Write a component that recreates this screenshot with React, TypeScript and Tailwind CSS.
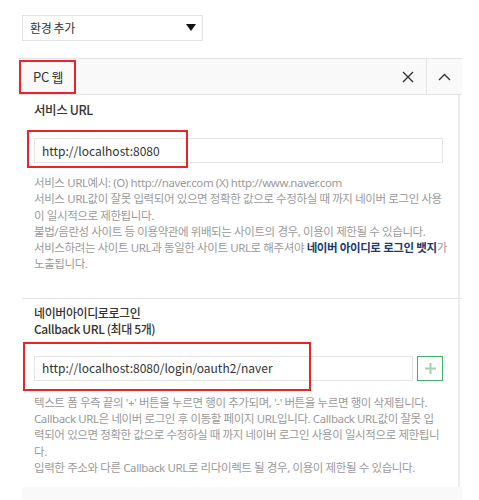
function Mark({ className }: { className: string }) {
  return <div className={`pointer-events-none absolute border-2 border-[#e8242b] ${className}`} />
}

function Help({ lines }: { lines: React.ReactNode[] }) {
  return <div className="font-['Noto_Sans','Noto_Sans_CJK_KR',sans-serif] text-[11.5px] leading-[16.3px] tracking-[-0.4px] text-[#9a9a9a]">
    {lines.map((l, i) => <div key={i} className="whitespace-nowrap">{l}</div>)}
  </div>
}

export default function App() {
  return <div className="h-[500px] w-[479px] overflow-hidden bg-white pt-[15px] font-['Noto_Sans_CJK_KR',sans-serif] text-[#333]">
    <div className="ml-[22px] flex h-[26px] w-[181px] items-center justify-between border border-[#e3e3e3] pl-[7px] pr-[6px] text-[12px] tracking-[-0.4px]">
      <span>환경 추가</span>
      <svg width="10" height="8" viewBox="0 0 10 8"><path d="M0 0H10L5 7Z" fill="#111" /></svg>
    </div>

    <div className="relative ml-[18px] mt-[17px] flex h-[37px] w-[444px] items-center border-y border-[#e5e5e5] bg-[#f9f9f9]">
      <span className="pl-[15px] text-[13px] tracking-[-0.3px]">PC 웹</span>
      <Mark className="left-[1px] top-[1px] h-[34px] w-[57px]" />
      <div className="ml-auto flex h-full">
        <div className="flex w-[36px] items-center justify-center">
          <svg width="12" height="12" viewBox="0 0 12 12"><path d="M1 1L11 11M11 1L1 11" stroke="#333" strokeWidth="1.4" /></svg>
        </div>
        <div className="flex w-[36px] items-center justify-center border-l border-[#e5e5e5]">
          <svg width="13" height="8" viewBox="0 0 13 8"><path d="M1 7L6.5 1.5L12 7" stroke="#333" strokeWidth="1.4" fill="none" /></svg>
        </div>
      </div>
    </div>

    <div className="ml-[18px] w-[442px] border-r-2 border-[#ececec]">
      <div className="pb-[25px] pl-4 pr-[15px] pt-[6px]">
        <div className="text-[12.5px] font-medium leading-[18px] tracking-[-0.4px]">서비스 URL</div>
        <div className="relative mt-[19px]">
          <div className="flex h-[25px] items-center border border-[#e5e5e5] pl-[7px] text-[12px]">http://localhost:8080</div>
          <Mark className="-left-[7px] -top-[8px] h-[38px] w-[161px]" />
        </div>
        <div className="mt-[12px]">
          <Help lines={[
            '서비스 URL예시: (O) http://naver.com (X) http://www.naver.com',
            '서비스 URL값이 잘못 입력되어 있으면 정확한 값으로 수정하실 때 까지 네이버 로그인 사용',
            '이 일시적으로 제한됩니다.',
            '불법/음란성 사이트 등 이용약관에 위배되는 사이트의 경우, 이용이 제한될 수 있습니다.',
            <>서비스하려는 사이트 URL과 동일한 사이트 URL로 해주셔야 <b className="text-[#1b3a6f]">네이버 아이디로 로그인 뱃지</b>가</>,
            '노출됩니다.',
          ]} />
        </div>
      </div>

      <div className="ml-[4px] h-px w-[440px] bg-[#e5e5e5]" />

      <div className="pb-[11px] pl-4 pr-[15px] pt-[6px]">
        <div className="text-[12px] font-medium leading-[16px] tracking-[-0.4px]">
          <div>네이버아이디로로그인</div>
          <div>Callback URL (최대 5개)</div>
        </div>
        <div className="relative mt-[19px] flex gap-[4px]">
          <div className="flex h-[25px] w-[379px] items-center border border-[#e5e5e5] pl-[7px] text-[12px]">http://localhost:8080/login/oauth2/naver</div>
          <div className="flex h-[25px] w-[26px] items-center justify-center border border-[#45b26b]">
            <svg width="11" height="11" viewBox="0 0 11 11"><path d="M5.5 0V11M0 5.5H11" stroke="#a9cfae" strokeWidth="2" /></svg>
          </div>
          <Mark className="-left-[11px] -top-[14px] h-[49px] w-[288px]" />
        </div>
        <div className="mt-[14px]">
          <Help lines={[
            "텍스트 폼 우측 끝의 '+' 버튼을 누르면 행이 추가되며, '-' 버튼을 누르면 행이 삭제됩니다.",
            'Callback URL은 네이버 로그인 후 이동할 페이지 URL입니다. Callback URL값이 잘못 입',
            '력되어 있으면 정확한 값으로 수정하실 때 까지 네이버 로그인 사용이 일시적으로 제한됩니',
            '다.',
            '입력한 주소와 다른 Callback URL로 리다이렉트 될 경우, 이용이 제한될 수 있습니다.',
          ]} />
        </div>
      </div>
    </div>
    <div className="ml-[22px] h-[20px] w-[440px] bg-[#f9f9f9]" />
  </div>
}
